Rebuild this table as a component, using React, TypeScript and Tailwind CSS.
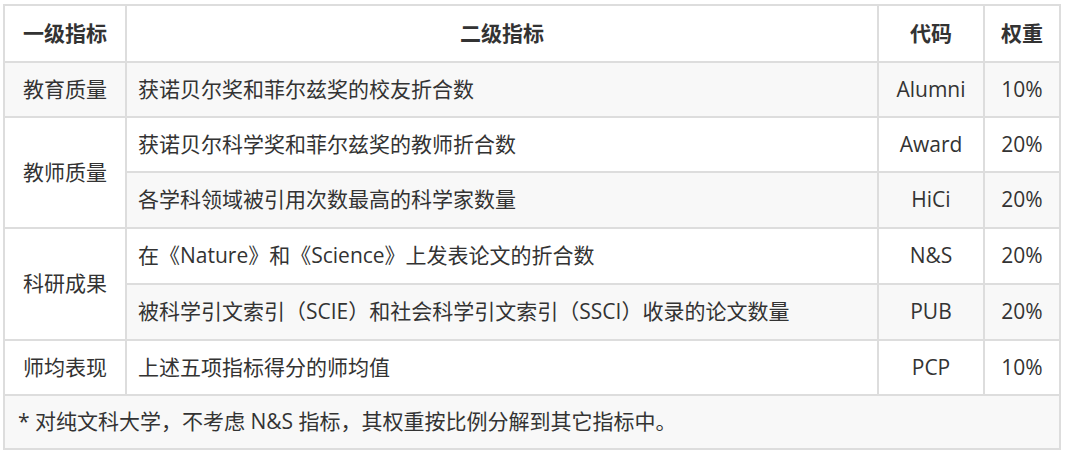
import React from "react";

const font = { fontFamily: '"Open Sans", "Noto Sans CJK SC", sans-serif' };

export default function App() {
  const td = "border-2 border-[#dddddd] px-[11px]";
  const c = `${td} text-center px-0`;
  return (
    <div className="w-[1066px] h-[453px] bg-white pt-[4px] pl-[3px]" style={font}>
      <table className="table-fixed border-collapse w-[1056px] text-[21px] text-[#333333]">
        <colgroup>
          <col className="w-[122px]" />
          <col className="w-[752px]" />
          <col className="w-[106px]" />
          <col className="w-[76px]" />
        </colgroup>
        <thead>
          <tr className="h-[57px] bg-white">
            <th className={`${c} font-bold`}>一级指标</th>
            <th className={`${c} font-bold`}>二级指标</th>
            <th className={`${c} font-bold`}>代码</th>
            <th className={`${c} font-bold`}>权重</th>
          </tr>
        </thead>
        <tbody>
          <tr className="h-[55px] bg-[#f8f8f8]">
            <td className={c}>教育质量</td>
            <td className={td}>获诺贝尔奖和菲尔兹奖的校友折合数</td>
            <td className={c}>Alumni</td>
            <td className={c}>10%</td>
          </tr>
          <tr className="h-[55px] bg-white">
            <td rowSpan={2} className={c}>教师质量</td>
            <td className={td}>获诺贝尔科学奖和菲尔兹奖的教师折合数</td>
            <td className={c}>Award</td>
            <td className={c}>20%</td>
          </tr>
          <tr className="h-[56px] bg-[#f8f8f8]">
            <td className={td}>各学科领域被引用次数最高的科学家数量</td>
            <td className={c}>HiCi</td>
            <td className={c}>20%</td>
          </tr>
          <tr className="h-[56px] bg-white">
            <td rowSpan={2} className={c}>科研成果</td>
            <td className={td}>在《Nature》和《Science》上发表论文的折合数</td>
            <td className={c}>N&amp;S</td>
            <td className={c}>20%</td>
          </tr>
          <tr className="h-[56px] bg-[#f8f8f8]">
            <td className={td}>被科学引文索引（SCIE）和社会科学引文索引（SSCI）收录的论文数量</td>
            <td className={c}>PUB</td>
            <td className={c}>20%</td>
          </tr>
          <tr className="h-[55px] bg-white">
            <td className={c}>师均表现</td>
            <td className={td}>上述五项指标得分的师均值</td>
            <td className={c}>PCP</td>
            <td className={c}>10%</td>
          </tr>
          <tr className="h-[54px] bg-[#f8f8f8]">
            <td colSpan={4} className={`${td} pl-[13px]`}>
              * 对纯文科大学，不考虑 N&amp;S 指标，其权重按比例分解到其它指标中。
            </td>
          </tr>
        </tbody>
      </table>
    </div>
  );
}
